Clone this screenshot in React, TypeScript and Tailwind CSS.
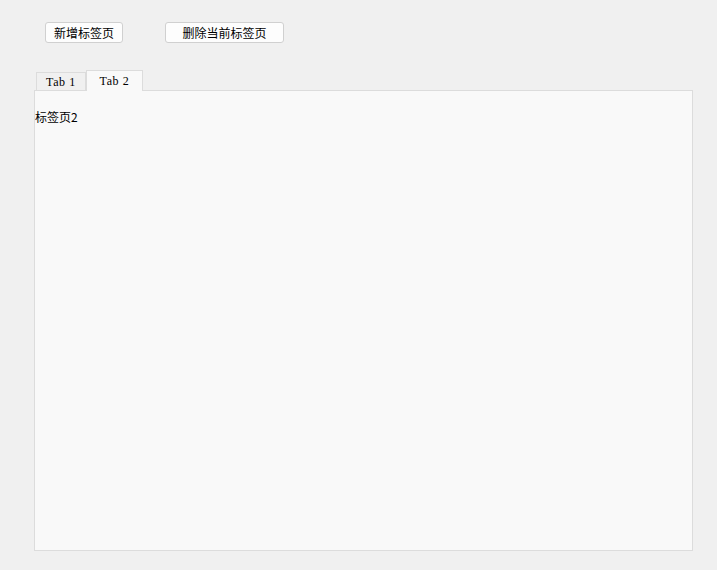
export default function App() {
  const cjk = { fontFamily: '"Noto Sans CJK SC", "Liberation Sans", sans-serif' };
  const serif = { fontFamily: '"Liberation Serif", "Noto Sans CJK SC", serif' };

  return (
    <div className="w-[717px] h-[570px] bg-[#f0f0f0] text-black overflow-hidden" style={cjk}>
      {/* button row */}
      <div className="flex gap-[42px] pl-[45px] pt-[22px]">
        <button className="w-[78px] h-[21px] bg-[#fdfdfd] border border-[#d0d0d0] rounded-[3px] text-[12px] leading-none">
          新增标签页
        </button>
        <button className="w-[119px] h-[21px] bg-[#fdfdfd] border border-[#d0d0d0] rounded-[3px] text-[12px] leading-none">
          删除当前标签页
        </button>
      </div>

      {/* tabs */}
      <div className="flex items-end pl-[36px] mt-[27px]" style={serif}>
        <div className="w-[50px] h-[18px] bg-[#f0f0f0] border border-b-0 border-[#dcdcdc] text-[12px] tracking-[0.6px] flex items-center justify-center">
          Tab 1
        </div>
        <div className="relative z-10 -mb-px w-[57px] h-[21px] bg-[#f9f9f9] border border-b-0 border-[#dcdcdc] text-[12px] tracking-[0.6px] flex items-center justify-center">
          Tab 2
        </div>
      </div>

      {/* panel */}
      <div className="ml-[34px] w-[659px] h-[461px] bg-[#f9f9f9] border border-[#dcdcdc]">
        <div className="mt-[18px] text-[12px] leading-[16px]">标签页2</div>
      </div>
    </div>
  );
}
